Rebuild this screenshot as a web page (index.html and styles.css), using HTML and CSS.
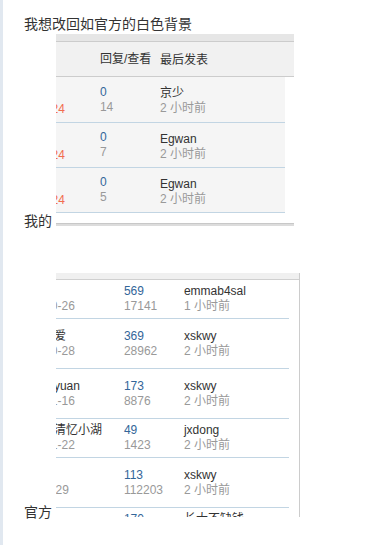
FILE: index.html
```html
<!DOCTYPE html>
<html>

<head>
  <title>白色背景</title>
  <link rel="stylesheet" href="styles.css">
</head>

<body>
  <div class="page">
    <div class="line">我想改回如官方的白色背景</div>

    <div class="line">我的
      <div class="shot shot-a">
        <div class="strip"></div>
        <div class="thead">
          <span class="subj"></span>
          <span class="num">回复/查看</span>
          <span class="last">最后发表</span>
        </div>
        <div class="tbody">
          <div class="row first">
            <div class="subj"><div>&nbsp;</div><div class="date new">2010-10-24</div></div>
            <div class="num"><div class="n1">0</div><div class="n2">14</div></div>
            <div class="last"><div class="who">京少</div><div class="when">2 小时前</div></div>
          </div>
          <div class="row">
            <div class="subj"><div>&nbsp;</div><div class="date new">2010-10-24</div></div>
            <div class="num"><div class="n1">0</div><div class="n2">7</div></div>
            <div class="last"><div class="who">Egwan</div><div class="when">2 小时前</div></div>
          </div>
          <div class="row">
            <div class="subj"><div>&nbsp;</div><div class="date new">2010-10-24</div></div>
            <div class="num"><div class="n1">0</div><div class="n2">5</div></div>
            <div class="last"><div class="who">Egwan</div><div class="when">2 小时前</div></div>
          </div>
        </div>
        <div class="foot"></div>
      </div>
    </div>

    <div class="line line-gap">官方
      <div class="shot shot-b">
        <div class="strip"></div>
        <div class="row">
          <div class="subj"><div>&nbsp;</div><div class="date">2010-10-26</div></div>
          <div class="num"><div class="n1">569</div><div class="n2">17141</div></div>
          <div class="last"><div class="who">emmab4sal</div><div class="when">1 小时前</div></div>
        </div>
        <div class="row tall">
          <div class="subj"><div class="title">爱</div><div class="date">2010-10-28</div></div>
          <div class="num"><div class="n1">369</div><div class="n2">28962</div></div>
          <div class="last"><div class="who">xskwy</div><div class="when">2 小时前</div></div>
        </div>
        <div class="row tall">
          <div class="subj"><div class="title">yuan</div><div class="date">2010-11-16</div></div>
          <div class="num"><div class="n1">173</div><div class="n2">8876</div></div>
          <div class="last"><div class="who">xskwy</div><div class="when">2 小时前</div></div>
        </div>
        <div class="row">
          <div class="subj"><div class="title">清忆小湖</div><div class="date">2010-11-22</div></div>
          <div class="num"><div class="n1">49</div><div class="n2">1423</div></div>
          <div class="last"><div class="who">jxdong</div><div class="when">2 小时前</div></div>
        </div>
        <div class="row tall">
          <div class="subj"><div>&nbsp;</div><div class="date short">2010-9-29</div></div>
          <div class="num"><div class="n1">113</div><div class="n2">112203</div></div>
          <div class="last"><div class="who">xskwy</div><div class="when">2 小时前</div></div>
        </div>
        <div class="row">
          <div class="subj"><div>&nbsp;</div><div class="date">2010-11-02</div></div>
          <div class="num"><div class="n1">170</div><div class="n2">9210</div></div>
          <div class="last"><div class="who">长大不缺钱</div><div class="when">2 小时前</div></div>
        </div>
      </div>
    </div>
  </div>
</body>

</html>
```

FILE: styles.css
```css
body {
  margin: 0;
  background: #fff;
  color: #333;
  font-family: "Liberation Sans", "Noto Sans CJK SC", sans-serif;
}

.page {
  min-height: 545px;
  box-sizing: border-box;
  padding: 14px 0 0 21px;
  border-left: 3px solid #e1e8f0;
  font-size: 14px;
  line-height: 20px;
}

.line-gap {
  margin-top: 42px;
}

/* the pasted screenshots, cropped like an image */
.shot {
  display: inline-block;
  overflow: hidden;
  vertical-align: baseline;
  font-size: 12px;
  line-height: 15px;
}

.strip {
  height: 7px;
  background: #e6e6e6;
  border-bottom: 1px solid #ccc;
}

.row {
  display: flex;
  align-items: center;
  border-bottom: 1px solid #c2d5e3;
}

.subj,
.num {
  flex: none;
}

.last {
  flex: 1;
  white-space: nowrap;
}

.n1 {
  color: #369;
}

.n2,
.when {
  color: #999;
}

.who,
.title {
  color: #333;
}

.title {
  margin-left: -2px;
  white-space: nowrap;
}

/* date lines end where the crop shows them, the start is cut off */
.date {
  display: flex;
  justify-content: flex-end;
  white-space: nowrap;
  color: #999;
}

.date.new {
  color: #f26c4f;
}

/* first shot: grey rows */
.shot-a {
  width: 238px;
  height: 192px;
}

.shot-a .thead {
  display: flex;
  align-items: center;
  height: 34px;
  background: #f1f1f1;
  border-bottom: 1px solid #ccc;
  color: #333;
}

.shot-a .tbody {
  width: 229px;
  background: #f5f5f5;
}

.shot-a .row {
  height: 44px;
}

.shot-a .row.first {
  height: 45px;
}

.shot-a .subj {
  width: 44px;
  padding-top: 5px;
}

.shot-a .date {
  width: 9px;
}

.shot-a .num {
  width: 60px;
}

.shot-a .last {
  padding-top: 3px;
}

.shot-a .foot {
  height: 2px;
  margin-top: 10px;
  background: #dcdcdc;
  border-top: 1px solid #c8c8c8;
}

/* second shot: white rows */
.shot-b {
  width: 243px;
  height: 244px;
  border-right: 1px solid #ccc;
}

.shot-b .strip {
  height: 6px;
  background: #f0f0f0;
  border-bottom-color: #d0d0d0;
}

.shot-b .row {
  width: 233px;
  height: 38px;
}

.shot-b .row.tall {
  height: 49px;
}

.shot-b .subj {
  width: 68px;
}

.shot-b .date {
  width: 19px;
}

.shot-b .date.short {
  width: 13px;
}

.shot-b .num {
  width: 60px;
}
```
